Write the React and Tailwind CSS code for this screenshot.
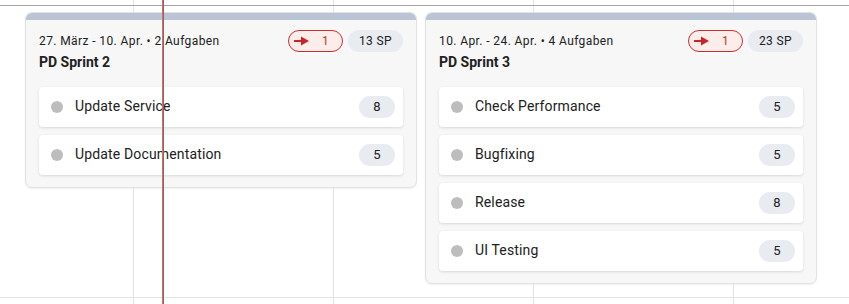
import React from "react";

const sprints = [
  {
    dates: "27. März - 10. Apr. • 2 Aufgaben",
    title: "PD Sprint 2",
    sp: "13 SP",
    tasks: [
      ["Update Service", 8],
      ["Update Documentation", 5],
    ],
  },
  {
    dates: "10. Apr. - 24. Apr. • 4 Aufgaben",
    title: "PD Sprint 3",
    sp: "23 SP",
    tasks: [
      ["Check Performance", 5],
      ["Bugfixing", 5],
      ["Release", 8],
      ["UI Testing", 5],
    ],
  },
];

function Arrow() {
  return (
    <svg width="15" height="10" viewBox="0 0 15 10">
      <line x1="0" y1="5" x2="9" y2="5" stroke="#c62828" strokeWidth="2.2" />
      <polygon points="7,0.5 15,5 7,9.5" fill="#c62828" />
    </svg>
  );
}

function Card({ s }) {
  return (
    <div className="w-[392px] rounded-[7px] border border-[#e2e2e2] bg-[#f7f7f7] shadow-[0_1px_2px_rgba(0,0,0,0.06)] overflow-hidden">
      <div className="h-[7px] bg-[#b9c4d5]" />
      <div className="px-[13px] pt-[10px] pb-[12px]">
        <div className="flex items-center justify-between h-[22px]">
          <span className="text-[12px] tracking-[0.4px] text-[#212121] leading-none">{s.dates}</span>
          <div className="flex items-center gap-[5px]">
            <div className="flex items-center gap-[13px] h-[22px] w-[55px] pl-[5px] rounded-full border border-[#c9302c] bg-[#fcecea]">
              <Arrow />
              <span className="text-[12px] tracking-[0.4px] text-[#c0392b] leading-none">1</span>
            </div>
            <div className="flex items-center justify-center h-[22px] w-[55px] rounded-full bg-[#e8ebf0] text-[12px] tracking-[0.4px] text-[#212121] leading-none">
              {s.sp}
            </div>
          </div>
        </div>
        <div className="text-[14px] font-bold leading-[20px] text-[#212121]">{s.title}</div>
        <div className="mt-[15px] flex flex-col gap-[8px]">
          {s.tasks.map(([name, pts]) => (
            <div
              key={name}
              className="h-[40px] flex items-center bg-white rounded-[4px] shadow-[0_1px_3px_rgba(0,0,0,0.13)] pl-[12px] pr-[8px]"
            >
              <span className="w-[12px] h-[12px] rounded-full bg-[#bdbdbd]" />
              <span className="ml-[12px] text-[14px] tracking-[0.15px] text-[#212121] flex-1 pb-[1px]">{name}</span>
              <span className="w-[36px] h-[22px] rounded-full bg-[#e8ebf0] flex items-center justify-center text-[13px] text-[#212121]">
                {pts}
              </span>
            </div>
          ))}
        </div>
      </div>
    </div>
  );
}

export default function App() {
  return (
    <div
      className="relative w-[849px] h-[304px] overflow-hidden bg-white"
      style={{ fontFamily: "Roboto, 'Liberation Sans', sans-serif" }}
    >
      <div className="absolute left-[133px] top-0 bottom-0 w-px bg-[#e3e3e3]" />
      <div className="absolute left-[333px] top-0 bottom-0 w-px bg-[#e3e3e3]" />
      <div className="absolute left-[533px] top-0 bottom-0 w-px bg-[#e3e3e3]" />
      <div className="absolute left-[733px] top-0 bottom-0 w-px bg-[#e3e3e3]" />
      <div className="absolute left-0 right-0 top-[5px] h-px bg-[#a5a5a5]" />
      <div className="absolute left-0 right-0 top-[297px] h-px bg-[#e3e3e3]" />

      <div className="relative z-10 flex items-start gap-[8px] pl-[25px] pt-[12px]">
        {sprints.map((s) => (
          <Card key={s.title} s={s} />
        ))}
      </div>

      <div className="absolute z-20 left-[162px] top-0 bottom-0 w-px bg-[#8a8a8a]" />
      <div className="absolute z-20 left-[163px] top-0 bottom-0 w-px bg-[#d9473a]" />
    </div>
  );
}
